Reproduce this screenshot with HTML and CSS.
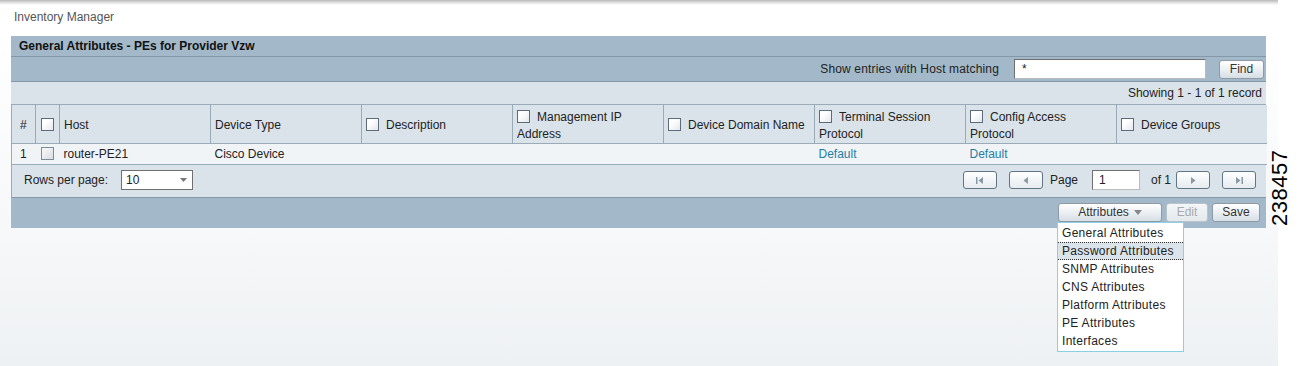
FILE: index.html
```html
<!DOCTYPE html>
<html>
<head>
<meta charset="utf-8">
<link rel="stylesheet" href="styles.css">
</head>
<body>
<div class="frame">
<div class="page">
  <div class="topline"></div>
  <div class="app-title">Inventory Manager</div>
  <div class="panel">
    <div class="panel-title">General Attributes - PEs for Provider Vzw</div>
    <div class="filter-bar">
      <span class="filter-label">Show entries with Host matching</span>
      <span class="text-input filter-input">*</span>
      <span class="btn find-btn">Find</span>
    </div>
    <div class="summary">Showing 1 - 1 of 1 record</div>
    <table class="grid">
      <colgroup>
        <col class="c-num"><col class="c-chk"><col class="c-w"><col class="c-w"><col class="c-w"><col class="c-w"><col class="c-w"><col class="c-w"><col class="c-w"><col class="c-last">
      </colgroup>
      <thead>
        <tr>
          <th class="num">#</th>
          <th class="chk"><span class="cb"></span></th>
          <th>Host</th>
          <th>Device Type</th>
          <th><span class="cb"></span><span class="hl">Description</span></th>
          <th class="two"><span class="cb"></span><span class="hl">Management IP</span><br>Address</th>
          <th><span class="cb"></span><span class="hl">Device Domain Name</span></th>
          <th class="two"><span class="cb"></span><span class="hl">Terminal Session</span><br>Protocol</th>
          <th class="two"><span class="cb"></span><span class="hl">Config Access</span><br>Protocol</th>
          <th><span class="cb"></span><span class="hl">Device Groups</span></th>
        </tr>
      </thead>
      <tbody>
        <tr>
          <td class="num">1</td>
          <td class="chk"><span class="cb cb-dis"></span></td>
          <td>router-PE21</td>
          <td>Cisco Device</td>
          <td></td>
          <td></td>
          <td></td>
          <td><span class="link">Default</span></td>
          <td><span class="link">Default</span></td>
          <td></td>
        </tr>
      </tbody>
    </table>
    <div class="pager">
      <div class="rows-per">
        <span>Rows per page:</span>
        <span class="select"><span>10</span><svg width="9" height="6" viewBox="0 0 9 6"><path d="M1 1h7L4.5 5z" fill="#777"/></svg></span>
      </div>
      <div class="pages">
        <span class="pbtn"><svg width="12" height="9" viewBox="0 0 12 9"><rect x="2" y="1" width="1.5" height="7" fill="#8a98a4"/><path d="M9 1v7L4.5 4.5z" fill="#8a98a4"/></svg></span>
        <span class="pbtn"><svg width="12" height="9" viewBox="0 0 12 9"><path d="M8 1v7L3.5 4.5z" fill="#8a98a4"/></svg></span>
        <span class="plabel">Page</span>
        <span class="text-input page-input">1</span>
        <span class="plabel of">of 1</span>
        <span class="pbtn"><svg width="12" height="9" viewBox="0 0 12 9"><path d="M4 1v7L8.5 4.5z" fill="#8a98a4"/></svg></span>
        <span class="pbtn"><svg width="12" height="9" viewBox="0 0 12 9"><path d="M3 1v7L7.5 4.5z" fill="#8a98a4"/><rect x="8.5" y="1" width="1.5" height="7" fill="#8a98a4"/></svg></span>
      </div>
    </div>
    <div class="toolbar">
      <div class="menu-wrap">
        <span class="btn attr-btn">Attributes <svg width="8" height="5" viewBox="0 0 8 5"><path d="M0 0h8L4 5z" fill="#888"/></svg></span>
        <ul class="menu">
          <li>General Attributes</li>
          <li class="active">Password Attributes</li>
          <li>SNMP Attributes</li>
          <li>CNS Attributes</li>
          <li>Platform Attributes</li>
          <li>PE Attributes</li>
          <li>Interfaces</li>
        </ul>
      </div>
      <span class="btn edit-btn">Edit</span>
      <span class="btn save-btn">Save</span>
    </div>
  </div>
</div>
<div class="fig-num">238457</div>
</div>
</body>
</html>
```
FILE: styles.css
```css
* { box-sizing: border-box; }
html, body { margin: 0; padding: 0; background: #fff; }
body { font-family: "Liberation Sans", Arial, sans-serif; font-size: 12px; color: #222; }

.frame {
  position: relative;
  width: 1306px;
  height: 366px;
  overflow: hidden;
}
.page {
  width: 1278px;
  height: 366px;
  background: linear-gradient(to bottom, #ffffff 0px, #ffffff 30px, #f6f8f9 230px, #eef1f3 366px);
}
.topline {
  height: 5px;
  background: linear-gradient(to bottom, #b9b9b9, #e6e6e6 60%, #ffffff);
}
.app-title {
  padding: 5px 0 0 14px;
  height: 31px;
  color: #555;
  font-size: 12px;
  line-height: 14px;
}

.panel {
  margin-left: 11px;
  width: 1255px;
  display: flex;
  flex-direction: column;
}
.panel-title {
  height: 21px;
  background: #a3b8c8;
  border-bottom: 1px solid #8399a9;
  padding-left: 8px;
  font-weight: bold;
  color: #111;
  line-height: 20px;
}
.filter-bar {
  height: 25px;
  background: #a3b8c8;
  border-bottom: 1px solid #8399a9;
  display: flex;
  align-items: center;
  justify-content: flex-end;
  padding-right: 2px;
}
.filter-label { margin-right: 15px; color: #222; letter-spacing: 0.15px; }
.text-input {
  display: inline-block;
  background: #fff;
  border: 1px solid #6f6f6f;
  border-right-color: #bbb;
  border-bottom-color: #bbb;
  padding-left: 7px;
  line-height: 18px;
  height: 20px;
}
.filter-input { width: 192px; margin-right: 13px; }

.btn {
  display: inline-flex;
  align-items: center;
  justify-content: center;
  height: 19px;
  border: 1px solid #8e9aa4;
  border-radius: 3px;
  background: linear-gradient(to bottom, #ffffff, #e9eef2 55%, #d6dee5);
  color: #333;
  line-height: 17px;
}
.find-btn { width: 45px; }

.summary {
  height: 23px;
  background: #dae3ea;
  border-bottom: 1px solid #9aabb8;
  text-align: right;
  padding-right: 4px;
  line-height: 22px;
}

.grid {
  border-collapse: collapse;
  width: 1255px;
  table-layout: fixed;
}
.c-num { width: 24px; }
.c-chk { width: 24px; }
.c-w { width: 151px; }
.c-last { width: 150px; }
.grid th, .grid td {
  text-align: left;
  font-weight: normal;
  padding: 0 0 0 4px;
  white-space: nowrap;
  overflow: hidden;
}
.grid th {
  background: #dae3ea;
  height: 38px;
  border-left: 1px solid #9aabb8;
  border-bottom: 1px solid #9aabb8;
  line-height: 17px;
  vertical-align: middle;
  padding-top: 2px;
}
.grid th.two { vertical-align: top; padding-top: 4px; }
.grid th.num, .grid td.num { padding-left: 8px; }
.grid th.chk, .grid td.chk { padding-left: 5px; }
.grid td {
  height: 21px;
  background: #f1f4f7;
  line-height: 18px;
  padding-bottom: 1px;
  border-bottom: 1px solid #9aabb8;
}
.grid td:first-child { border-left: 1px solid #9aabb8; }
.hl { margin-left: 7px; }
.link { color: #1f7ea6; }

.cb {
  display: inline-block;
  width: 13px;
  height: 13px;
  border: 1px solid #5d6c78;
  background: linear-gradient(135deg, #ffffff 30%, #e4e8ec);
  vertical-align: -2px;
}
.cb-dis {
  border-color: #7e8c98;
  background: linear-gradient(135deg, #f7f7f7 10%, #d8dde2);
}

.pager {
  height: 33px;
  background: #dae3ea;
  border-bottom: 1px solid #8399a9;
  border-left: 1px solid #9aabb8;
  display: flex;
  align-items: center;
  justify-content: space-between;
  padding: 0 10px 2px 12px;
}
.rows-per { display: flex; align-items: center; }
.select {
  margin-left: 13px;
  width: 72px;
  height: 20px;
  background: #fff;
  border: 1px solid #6f6f6f;
  display: inline-flex;
  align-items: center;
  justify-content: space-between;
  padding: 0 4px 0 4px;
}
.pages { display: flex; align-items: center; }
.pbtn {
  display: inline-flex;
  align-items: center;
  justify-content: center;
  width: 34px;
  height: 18px;
  border: 1px solid #617585;
  border-radius: 3px;
  background: linear-gradient(to bottom, #ffffff, #e6ebef);
  margin-left: 12px;
}
.pbtn:first-child { margin-left: 0; }
.plabel { margin-left: 7px; }
.page-input { width: 48px; margin-left: 14px; padding-left: 6px; }
.of { margin-left: 11px; margin-right: -7px; }

.toolbar {
  height: 30px;
  background: #a3b8c8;
  display: flex;
  justify-content: flex-end;
  align-items: flex-start;
  padding: 5px 6px 0 0;
}
.menu-wrap { position: relative; }
.attr-btn { width: 104px; gap: 5px; color: #333; }
.edit-btn { width: 42px; margin-left: 4px; color: #aaa; background: linear-gradient(to bottom, #f4f6f8, #e4e9ed); border-color: #b8c3cc; }
.save-btn { width: 48px; margin-left: 4px; }

.menu {
  position: absolute;
  left: -1px;
  top: 19px;
  width: 127px;
  margin: 0;
  padding: 1px 0;
  list-style: none;
  background: #fff;
  border: 1px solid #8bd0e2;
  z-index: 5;
}
.menu li {
  height: 18px;
  line-height: 18px;
  padding-left: 4px;
  color: #222;
  white-space: nowrap;
  letter-spacing: 0.3px;
}
.menu li.active {
  background: #dce4eb;
  border-top: 1px dotted #333;
  border-bottom: 1px dotted #333;
  line-height: 16px;
}

.fig-num {
  position: absolute;
  left: 1242px;
  top: 177px;
  width: 76px;
  height: 22px;
  line-height: 22px;
  font-size: 22px;
  color: #000;
  transform: rotate(-90deg);
  text-align: center;
  letter-spacing: 0.5px;
}
```
